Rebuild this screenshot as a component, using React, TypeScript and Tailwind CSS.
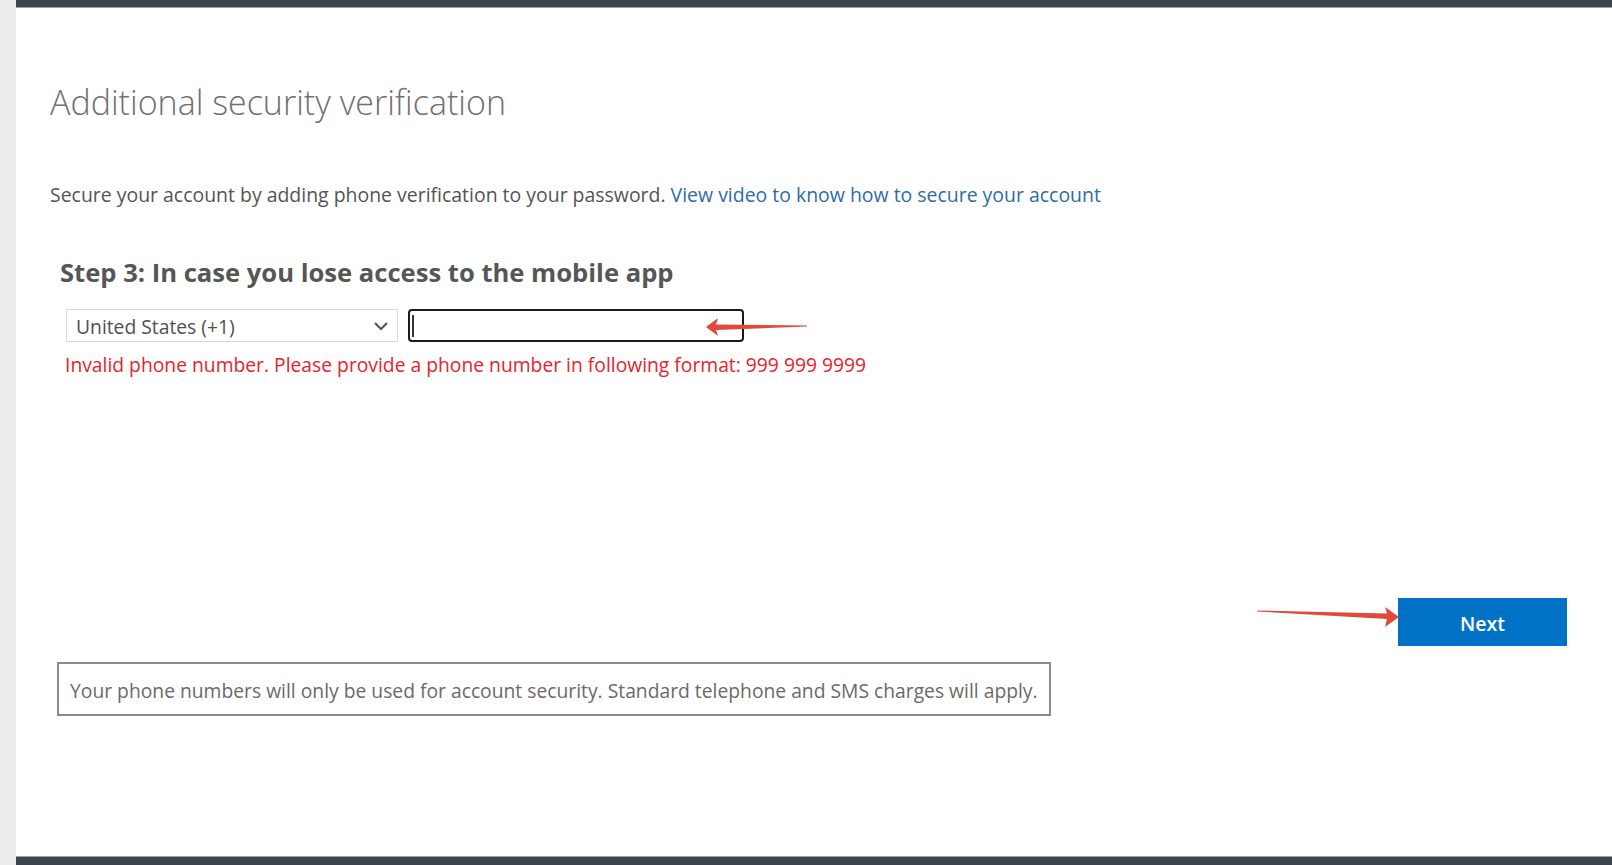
import React from "react";

function Arrow1() {
  return (
    <svg className="absolute left-[296px] top-[6px]" width="104" height="22" viewBox="0 0 104 22">
      <path d="M0 10 L12 1 L10 7.5 L101 8.5 L101 9.5 L10 13 L12 19 Z" fill="#e2493a" />
    </svg>
  );
}

function Arrow2() {
  return (
    <svg className="absolute left-[-141px] top-[9px]" width="143" height="22" viewBox="0 0 143 22">
      <path d="M0 3.5 L130 6.5 L128 0 L142 10 L128 20 L130 12 L0 4.5 Z" fill="#e2493a" />
    </svg>
  );
}

export default function App() {
  return (
    <div className="flex h-[865px] w-[1612px] bg-white font-['Open_Sans',sans-serif]">
      <div className="w-[16px] shrink-0 bg-[#ececec]" />
      <div className="flex flex-1 flex-col">
        <div className="h-[8px] shrink-0 border-b border-[#9aa0a8] bg-[#3d4450]" />
        <div className="flex flex-1 flex-col">
          <h1 className="ml-[34px] mt-[70px] text-[34px] font-light leading-[48px] text-[#707070]">
            Additional security verification
          </h1>
          <p className="ml-[34px] mt-[56px] text-[19.45px] leading-[26px] text-[#545454]">
            Secure your account by adding phone verification to your password.{" "}
            <a className="text-[#2f6ca6]">View video to know how to secure your account</a>
          </p>
          <h2 className="ml-[44px] mt-[48px] text-[25.6px] font-bold leading-[34px] text-[#565656]">
            Step 3: In case you lose access to the mobile app
          </h2>
          <div className="ml-[50px] mt-[19px] flex items-center gap-[10px]">
            <div className="flex h-[33px] w-[332px] items-center justify-between border border-[#c9dcef] pl-[9px] pr-[8px] pt-[3px] text-[19.3px] text-[#505050]">
              <span>United States (+1)</span>
              <svg width="16" height="12" viewBox="0 0 16 12" className="-mt-[3px]">
                <path d="M2 3 L8 9 L14 3" fill="none" stroke="#555" strokeWidth="2.2" />
              </svg>
            </div>
            <div className="relative h-[33px] w-[336px] rounded-[4px] border-2 border-[#1a1a1a]">
              <div className="ml-[2px] mt-[4px] h-[22px] w-[2px] bg-[#333]" />
              <Arrow1 />
            </div>
          </div>
          <p className="ml-[49px] mt-[10px] text-[19.3px] leading-[26px] text-[#e8232b]">
            Invalid phone number. Please provide a phone number in following format: 999 999 9999
          </p>
          <div className="mr-[45px] mt-[220px] flex justify-end">
            <div className="relative">
              <Arrow2 />
              <button className="h-[48px] w-[169px] bg-[#0072c6] pt-[3px] text-[19.5px] font-semibold text-white">
                Next
              </button>
            </div>
          </div>
          <div className="ml-[41px] mt-[16px] w-[994px] border-2 border-[#8a8a8a] px-[11px] pb-[10px] pt-[14px] text-[19.3px] leading-[26px] text-[#6a6a6a]">
            Your phone numbers will only be used for account security. Standard telephone and SMS charges will apply.
          </div>
        </div>
        <div className="h-[9px] shrink-0 border-t border-[#9aa0a8] bg-[#3d4450]" />
      </div>
    </div>
  );
}
